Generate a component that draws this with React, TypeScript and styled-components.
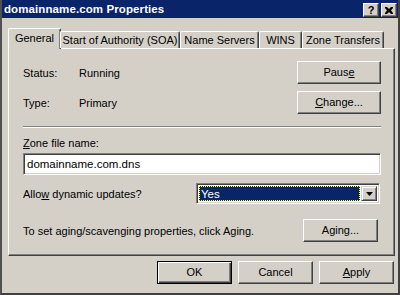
import React from "react";
import styled, { createGlobalStyle } from "styled-components";

const Global = createGlobalStyle`
  html, body { margin: 0; padding: 0; background: #d4d0c8; }
  * { box-sizing: border-box; }
`;

const Window = styled.div`
  width: 400px;
  height: 295px;
  background: #d4d0c8;
  border-left: 2px solid #505050;
  border-right: 2px solid #404040;
  border-bottom: 2px solid #404040;
  display: flex;
  flex-direction: column;
  font-family: "Liberation Sans", Arial, sans-serif;
  font-size: 11px;
  color: #000;
  overflow: hidden;
`;

const TitleBar = styled.div`
  height: 18px;
  flex: none;
  background: #0a246a;
  display: flex;
  align-items: center;
  justify-content: space-between;
  padding: 0 1px 0 2px;
`;

const TitleText = styled.span`
  color: #fff;
  font-weight: bold;
  font-size: 11.5px;
  letter-spacing: 0.1px;
`;

const CaptionButtons = styled.div`
  display: flex;
  gap: 2px;
  margin-top: 2px;
`;

const CaptionButton = styled.div`
  width: 16px;
  height: 14px;
  background: #d4d0c8;
  border-style: solid;
  border-width: 1px;
  border-color: #fff #404040 #404040 #fff;
  box-shadow: inset -1px -1px #808080;
  display: flex;
  align-items: center;
  justify-content: center;
  font-weight: bold;
  font-size: 11px;
  line-height: 1;
`;

const TabStrip = styled.div`
  display: flex;
  align-items: flex-end;
  height: 20px;
  margin: 10px 0 0 6px;
  position: relative;
  z-index: 1;
`;

const Tab = styled.div<{ $active?: boolean; $w: number }>`
  width: ${(p) => p.$w}px;
  height: ${(p) => (p.$active ? 21 : 17)}px;
  margin-bottom: ${(p) => (p.$active ? -1 : 0)}px;
  margin-right: ${(p) => (p.$active ? -1 : 0)}px;
  background: #d4d0c8;
  border-top: 1px solid #fff;
  border-left: 1px solid #fff;
  border-right: 1px solid #404040;
  box-shadow: inset -1px 0 #808080;
  border-radius: 2px 2px 0 0;
  display: flex;
  align-items: center;
  justify-content: center;
  padding-bottom: ${(p) => (p.$active ? 2 : 0)}px;
  white-space: nowrap;
`;

const Panel = styled.div`
  height: 208px;
  margin: 0 3px 0 6px;
  border-style: solid;
  border-width: 1px;
  border-color: #fff #404040 #404040 #fff;
  box-shadow: inset -1px -1px #808080;
  padding: 0 13px 0 14px;
  display: flex;
  flex-direction: column;
`;

const Row = styled.div<{ $mt: number }>`
  display: flex;
  align-items: center;
  margin-top: ${(p) => p.$mt}px;
`;

const Label = styled.span<{ $w?: number }>`
  ${(p) => (p.$w ? `width: ${p.$w}px;` : "")}
  flex: none;
  white-space: nowrap;
`;

const Spacer = styled.div`
  flex: 1;
`;

const Button = styled.div<{ $w: number; $mr?: number }>`
  width: ${(p) => p.$w}px;
  height: 23px;
  margin-right: ${(p) => p.$mr ?? 0}px;
  flex: none;
  background: #d4d0c8;
  border-style: solid;
  border-width: 1px;
  border-color: #fff #404040 #404040 #fff;
  box-shadow: inset -1px -1px #808080;
  display: flex;
  align-items: center;
  justify-content: center;
  padding-bottom: 1px;
`;

const DefaultButton = styled(Button)`
  border: 1px solid #000;
  box-shadow: inset 1px 1px #fff, inset -1px -1px #404040, inset -2px -2px #808080;
`;

const Mn = styled.span`
  text-decoration: underline;
  text-underline-offset: 1px;
`;

const Separator = styled.div`
  height: 2px;
  margin-top: 12px;
  border-top: 1px solid #808080;
  border-bottom: 1px solid #fff;
`;

const FieldLabel = styled.div`
  margin-top: 9px;
  line-height: 13px;
`;

const TextInput = styled.div`
  height: 22px;
  margin-top: 3px;
  background: #fff;
  border-style: solid;
  border-width: 1px;
  border-color: #808080 #fff #fff #808080;
  box-shadow: inset 1px 1px #404040, inset -1px -1px #d4d0c8;
  display: flex;
  align-items: center;
  padding: 0 0 1px 3px;
  font-size: 11.5px;
`;

const Combo = styled.div`
  width: 184px;
  height: 21px;
  margin-left: auto;
  margin-right: 1px;
  background: #fff;
  border-style: solid;
  border-width: 1px;
  border-color: #808080 #fff #fff #808080;
  box-shadow: inset 1px 1px #404040, inset -1px -1px #d4d0c8;
  display: flex;
  padding: 2px;
  gap: 1px;
`;

const ComboValue = styled.div`
  flex: 1;
  background: #0a246a;
  color: #fff;
  outline: 1px dotted #ffff60;
  outline-offset: -1px;
  display: flex;
  align-items: center;
  padding-left: 2px;
  font-size: 11.5px;
`;

const ComboArrow = styled.div`
  width: 16px;
  background: #d4d0c8;
  border-style: solid;
  border-width: 1px;
  border-color: #d4d0c8 #404040 #404040 #d4d0c8;
  box-shadow: inset 1px 1px #fff, inset -1px -1px #808080;
  display: flex;
  align-items: center;
  justify-content: center;
`;

const Footer = styled.div`
  display: flex;
  justify-content: flex-end;
  gap: 6px;
  margin: 5px 4px 0 0;
`;

export default function App() {
  return (
    <>
      <Global />
      <Window>
        <TitleBar>
          <TitleText>domainname.com Properties</TitleText>
          <CaptionButtons>
            <CaptionButton>?</CaptionButton>
            <CaptionButton>
              <svg width="8" height="7" viewBox="0 0 8 7">
                <path d="M0 0h2l2 2 2-2h2v1L6 3.5 8 6v1H6L4 5 2 7H0V6l2-2.5L0 1z" fill="#000" />
              </svg>
            </CaptionButton>
          </CaptionButtons>
        </TitleBar>
        <TabStrip>
          <Tab $active $w={53}>General</Tab>
          <Tab $w={120}>Start of Authority (SOA)</Tab>
          <Tab $w={79}>Name Servers</Tab>
          <Tab $w={43}>WINS</Tab>
          <Tab $w={82}>Zone Transfers</Tab>
        </TabStrip>
        <Panel>
          <Row $mt={12}>
            <Label $w={56}>Status:</Label>
            <Label>Running</Label>
            <Spacer />
            <Button $w={84}>
              Paus<Mn>e</Mn>
            </Button>
          </Row>
          <Row $mt={7}>
            <Label $w={56}>Type:</Label>
            <Label>Primary</Label>
            <Spacer />
            <Button $w={84}>
              <Mn>C</Mn>hange...
            </Button>
          </Row>
          <Separator />
          <FieldLabel>
            <Mn>Z</Mn>one file name:
          </FieldLabel>
          <TextInput>domainname.com.dns</TextInput>
          <Row $mt={8}>
            <Label>
              Allo<Mn>w</Mn> dynamic updates?
            </Label>
            <Combo>
              <ComboValue>Yes</ComboValue>
              <ComboArrow>
                <svg width="7" height="4" viewBox="0 0 7 4">
                  <path d="M0 0h7L3.5 4z" fill="#000" />
                </svg>
              </ComboArrow>
            </Combo>
          </Row>
          <Row $mt={15}>
            <Label>To set aging/scavenging properties, click Aging.</Label>
            <Spacer />
            <Button $w={75} $mr={3}>
              Aging...
            </Button>
          </Row>
        </Panel>
        <Footer>
          <DefaultButton $w={75}>OK</DefaultButton>
          <Button $w={75}>Cancel</Button>
          <Button $w={75}>
            <Mn>A</Mn>pply
          </Button>
        </Footer>
      </Window>
    </>
  );
}
